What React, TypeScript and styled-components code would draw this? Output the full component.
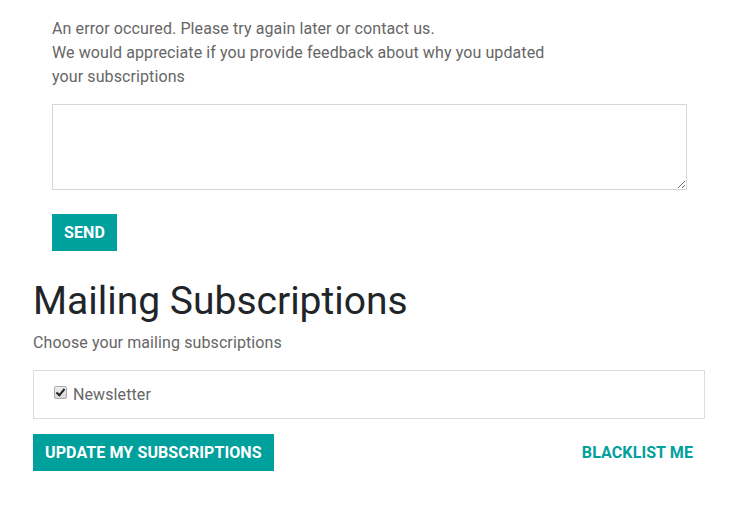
import React from 'react';
import styled, { createGlobalStyle } from 'styled-components';

const GlobalStyle = createGlobalStyle`
  html, body {
    margin: 0;
    padding: 0;
    background: #ffffff;
    font-family: Roboto, "Liberation Sans", sans-serif;
    color: #666666;
  }
`;

const Page = styled.div`
  width: 672px;
  padding: 17px 0 0 33px;
`;

const FeedbackForm = styled.form`
  padding: 0 18px 0 19px;
`;

const Message = styled.p`
  margin: 0;
  max-width: 505px;
  font-size: 16px;
  line-height: 24px;
  letter-spacing: 0.1px;
  color: #666666;
`;

const Feedback = styled.textarea`
  display: block;
  box-sizing: border-box;
  width: 100%;
  height: 86px;
  margin: 15px 0 24px;
  border: 1px solid #d3d6db;
  border-radius: 0;
  font-family: inherit;
  font-size: 16px;
  resize: vertical;
`;

const Button = styled.button<{ $variant?: 'primary' | 'link' }>`
  height: 37px;
  padding: 0 12px;
  border: none;
  border-radius: 0;
  font-family: Roboto, "Liberation Sans", sans-serif;
  font-size: 16px;
  font-weight: 700;
  letter-spacing: 0.1px;
  text-transform: uppercase;
  cursor: pointer;
  background: ${(p) => (p.$variant === 'link' ? 'transparent' : '#00a09d')};
  color: ${(p) => (p.$variant === 'link' ? '#00a09d' : '#ffffff')};
`;

const Title = styled.h1`
  margin: 26px 0 0;
  font-size: 39px;
  font-weight: 400;
  line-height: 48px;
  color: #212529;
`;

const Lead = styled.p`
  margin: 6px 0 0;
  font-size: 16px;
  line-height: 24px;
  letter-spacing: 0.1px;
  color: #666666;
`;

const ListBox = styled.div`
  box-sizing: border-box;
  margin-top: 15px;
  height: 49px;
  border: 1px solid #dddddd;
  display: flex;
  align-items: center;
  padding: 0 20px;
`;

const Option = styled.label`
  display: flex;
  align-items: center;
  gap: 6px;
  font-size: 16px;
  letter-spacing: 0.1px;
  color: #666666;
`;

const Check = styled.input`
  appearance: none;
  margin: 0;
  width: 13px;
  height: 13px;
  box-sizing: border-box;
  position: relative;
  top: -2px;
  border: 1px solid #a9a9a9;
  border-radius: 2px;
  background: linear-gradient(#ededed, #d8d8d8);

  &:checked::after {
    content: '';
    position: absolute;
    left: 3px;
    top: 0px;
    width: 3px;
    height: 7px;
    border: solid #222;
    border-width: 0 2px 2px 0;
    transform: rotate(40deg);
  }
`;

const Actions = styled.div`
  display: flex;
  justify-content: space-between;
  align-items: center;
  margin-top: 15px;
`;

export default function App() {
  return (
    <Page>
      <GlobalStyle />
      <FeedbackForm onSubmit={(e) => e.preventDefault()}>
        <Message>
          An error occured. Please try again later or contact us.
          <br />
          We would appreciate if you provide feedback about why you updated your subscriptions
        </Message>
        <Feedback />
        <Button type="submit">Send</Button>
      </FeedbackForm>
      <Title>Mailing Subscriptions</Title>
      <Lead>Choose your mailing subscriptions</Lead>
      <ListBox>
        <Option>
          <Check type="checkbox" defaultChecked />
          Newsletter
        </Option>
      </ListBox>
      <Actions>
        <Button type="button">Update my subscriptions</Button>
        <Button type="button" $variant="link">Blacklist me</Button>
      </Actions>
    </Page>
  );
}
